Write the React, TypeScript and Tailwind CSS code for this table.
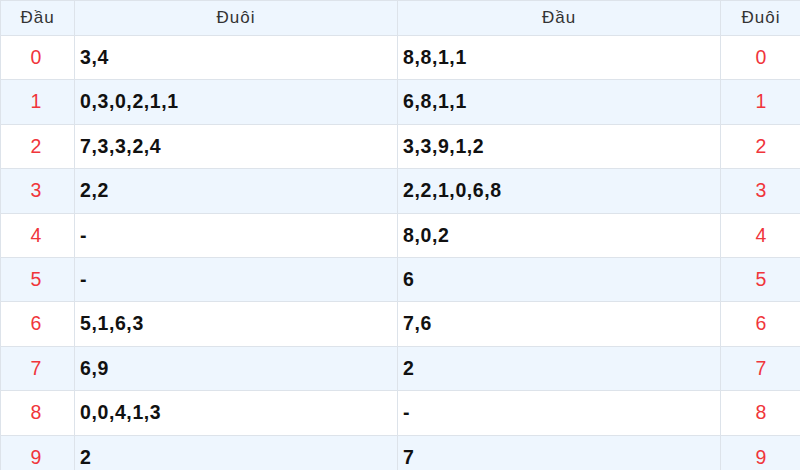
const rows: [string, string, string][] = [
  ['0', '3,4', '8,8,1,1'],
  ['1', '0,3,0,2,1,1', '6,8,1,1'],
  ['2', '7,3,3,2,4', '3,3,9,1,2'],
  ['3', '2,2', '2,2,1,0,6,8'],
  ['4', '-', '8,0,2'],
  ['5', '-', '6'],
  ['6', '5,1,6,3', '7,6'],
  ['7', '6,9', '2'],
  ['8', '0,0,4,1,3', '-'],
  ['9', '2', '7'],
]

export default function App() {
  return (
    <div className="w-[800px] h-[470px] overflow-hidden bg-white font-['Liberation_Sans',Arial,sans-serif]">
      <table className="w-[801px] border-collapse table-fixed">
        <colgroup>
          <col className="w-[74px]" />
          <col className="w-[323px]" />
          <col className="w-[323px]" />
          <col className="w-[81px]" />
        </colgroup>
        <thead>
          <tr className="h-[35px] bg-[#eef6fe] text-[17px] tracking-[1px] text-[#333]">
            <th className="border border-[#dde3ea] font-normal">Đầu</th>
            <th className="border border-[#dde3ea] font-normal">Đuôi</th>
            <th className="border border-[#dde3ea] font-normal">Đầu</th>
            <th className="border border-[#dde3ea] font-normal">Đuôi</th>
          </tr>
        </thead>
        <tbody>
          {rows.map(([n, a, b], i) => (
            <tr key={n} className={`h-[44.4px] ${i % 2 ? 'bg-[#eef6fe]' : 'bg-white'}`}>
              <td className="border border-[#dde3ea] pr-[3px] text-center text-[19.5px] text-[#f0353b]">{n}</td>
              <td className="border border-[#dde3ea] pl-[5px] text-[19.5px] tracking-[0.6px] font-bold text-[#111]">{a}</td>
              <td className="border border-[#dde3ea] pl-[5px] text-[19.5px] tracking-[0.6px] font-bold text-[#111]">{b}</td>
              <td className="border border-[#dde3ea] text-center text-[19.5px] text-[#f0353b]">{n}</td>
            </tr>
          ))}
        </tbody>
      </table>
    </div>
  )
}
